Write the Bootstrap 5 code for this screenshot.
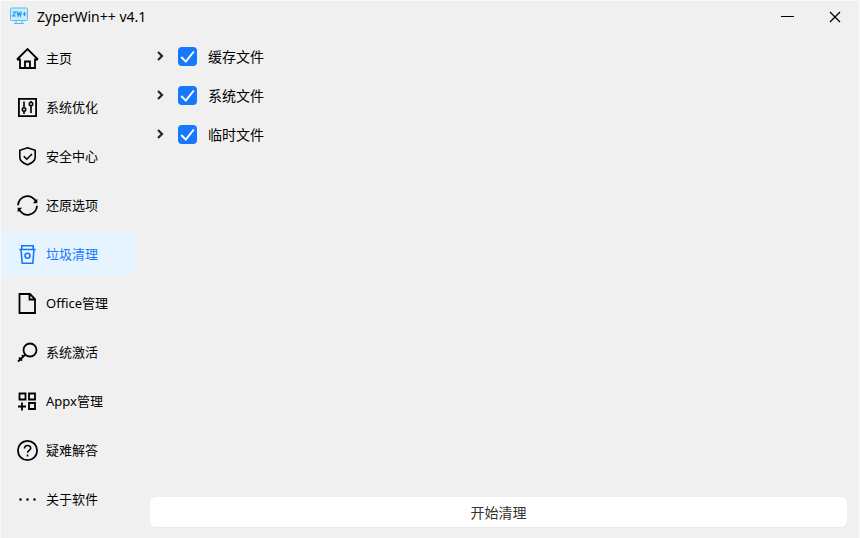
<!DOCTYPE html>
<html lang="zh-CN">
<head>
<meta charset="utf-8">
<meta name="viewport" content="width=device-width, initial-scale=1">
<title>ZyperWin++ v4.1</title>
<link href="https://cdn.jsdelivr.net/npm/bootstrap@5.3.0/dist/css/bootstrap.min.css" rel="stylesheet">
<style>
body { font-family: "Noto Sans", "Noto Sans CJK SC", sans-serif; font-size: 13px; line-height: 20px; color: #000; background: #f0f0f0; }
.app-window { border: 1px solid #fafafa; border-bottom: 0; }
.titlebar { height: 32px; padding-left: 8px; margin-bottom: 2px; }
.app-logo { width: 20px; height: 20px; margin: 0 8px 2px 0; }
.app-title { font-size: 14px; }
.win-btn { width: 48px; height: 32px; color: #000; }
.side { width: 134px; padding: 0 1px; gap: 3px; }
.side .nav-link { height: 46px; padding: 0 0 0 14px; gap: 7px; color: #000; border-radius: 6px; white-space: nowrap; }
.side .nav-link.active { color: #1677ff; background: #e6f4ff; }
.side svg { width: 23px; height: 23px; flex: none; }
.stroke { fill: none; stroke: currentColor; stroke-width: 1.8; }
.stroke-thin { stroke-width: 1.6; }
.content { padding: 2px 12px 11px 15px; }
.tree-row { height: 39px; font-size: 14px; }
.twisty { width: 20px; height: 20px; margin: 0 8px 2px 0; }
.twisty .stroke { stroke-width: 2.2; }
.tree-row .form-check-input { width: 19px; height: 19px; margin: 0 11px 0 0; border: 0; border-radius: 4px; }
.tree-row .form-check-input:checked { background-color: #1677ff; background-image: url("data:image/svg+xml,%3csvg xmlns='http://www.w3.org/2000/svg' viewBox='0 0 19 19'%3e%3cpath d='M3.200 10l4.600 4.600L15.800 4.500' fill='none' stroke='white' stroke-width='2'/%3e%3c/svg%3e"); }
.run-btn, .run-btn:hover { height: 30px; padding: 0; font-size: 14px; color: #333; background: #fff; border: 0; border-radius: 6px; box-shadow: 0 1px 1px #e8e8e8; }
</style>
</head>
<body>
<div class="app-window d-flex flex-column vh-100">
  <header class="titlebar d-flex align-items-center flex-shrink-0">
    <svg class="app-logo" viewBox="0 0 20 20" aria-hidden="true">
      <rect x="1.500" y="2" width="17" height="12.500" rx="1" fill="#c9edff" stroke="#5bbcf5"/>
      <path d="M7 15v2.500M13 15v2.500M5 17.500h10" fill="none" stroke="#5bbcf5"/>
      <path d="M3.500 6h3L3.700 10H7M8 5.500l1 4.500 1.200-3.500 1.200 3.500 1-4.500M13.500 8h4M15.500 6v4" fill="none" stroke="#249bea" stroke-width="1.200"/>
    </svg>
    <span class="app-title me-auto">ZyperWin++ v4.1</span>
    <button type="button" class="win-btn btn p-0 border-0 rounded-0 d-flex align-items-center justify-content-center" aria-label="最小化"><svg width="13" height="14"><path d="M0 6.500h13" stroke="currentColor"/></svg></button>
    <button type="button" class="win-btn btn p-0 border-0 rounded-0 d-flex align-items-center justify-content-center" aria-label="关闭"><svg width="12" height="12"><path d="M1 1l10 10M11 1L1 11" stroke="currentColor" stroke-width="1.300"/></svg></button>
  </header>
  <div class="d-flex flex-grow-1">
    <nav class="side nav flex-column flex-nowrap flex-shrink-0" aria-label="主导航">
      <a class="nav-link d-flex align-items-center" href="#"><svg class="stroke" viewBox="0 0 23 23"><path d="M1 12.500L11.500 2 22 12.500M1 12.500h3v8.500h15v-8.500h3M9 21v-6.500h5V21"/></svg>主页</a>
      <a class="nav-link d-flex align-items-center" href="#"><svg class="stroke" viewBox="0 0 23 23"><path d="M2.900 2.900h17.200v17.200H2.900z"/><path class="stroke-thin" d="M8 5.500v6M8 15.500v2.500M15 5v2M15 10v7"/><circle cx="8" cy="13.500" r="1.700" class="stroke-thin"/><circle cx="15" cy="8" r="1.700" class="stroke-thin"/></svg>系统优化</a>
      <a class="nav-link d-flex align-items-center" href="#"><svg class="stroke stroke-thin" viewBox="0 0 23 23"><path d="M11.500 2.800l7.700 2.500v7c0 3.200-2.700 5.700-7.700 7.500-5-1.800-7.700-4.300-7.700-7.500v-7zM7.800 11.200l3 3 5.200-5.200"/></svg>安全中心</a>
      <a class="nav-link d-flex align-items-center" href="#"><svg class="stroke" viewBox="0 0 23 23"><path d="M2 11.300A9.400 9.400 0 0 1 20 7.800M21 11.700A9.400 9.400 0 0 1 3 15.200"/><path d="M21.300 4.800V9.200h-4.500zM1.700 18.200V13.800h4.500z" fill="currentColor" stroke="none"/></svg>还原选项</a>
      <a class="nav-link active d-flex align-items-center" aria-current="page" href="#"><svg class="stroke stroke-thin" viewBox="0 0 23 23"><path d="M3.300 6.500h16.400M5.800 6V2.800h11.400V6M5 6.500l1.200 13.700h10.600L18 6.500"/><circle cx="11.500" cy="12.800" r="2.500"/></svg>垃圾清理</a>
      <a class="nav-link d-flex align-items-center" href="#"><svg class="stroke" viewBox="0 0 23 23"><path d="M3.500 2h10.500l5 5v14H3.500zM13.500 2v5.500h5.500"/></svg>Office管理</a>
      <a class="nav-link d-flex align-items-center" href="#"><svg class="stroke" viewBox="0 0 23 23"><circle cx="14" cy="9" r="6.500"/><path d="M9.500 13.500L2 20.500M3 16.500l3 3.200M6 14l2 2.200"/></svg>系统激活</a>
      <a class="nav-link d-flex align-items-center" href="#"><svg class="stroke" viewBox="0 0 23 23"><path d="M3.500 3.500h6v6h-6zM13 3.500h6v6h-6zM13 13h6v6h-6zM6 12.500v8M2 16.500h8"/></svg>Appx管理</a>
      <a class="nav-link d-flex align-items-center" href="#"><svg class="stroke" viewBox="0 0 23 23"><circle cx="11.500" cy="11.500" r="9.600"/><path class="stroke-thin" d="M8.500 9.500c0-4 6.200-4 6.200-.3 0 2-3.200 2.300-3.200 4.600M11.500 15.500v1.900"/></svg>疑难解答</a>
      <a class="nav-link d-flex align-items-center" href="#"><svg viewBox="0 0 23 23" fill="currentColor"><circle cx="4.500" cy="11.500" r="1.200"/><circle cx="11.500" cy="11.500" r="1.200"/><circle cx="18.500" cy="11.500" r="1.200"/></svg>关于软件</a>
    </nav>
    <main class="content d-flex flex-column flex-grow-1">
      <div class="tree-row d-flex align-items-center"><button type="button" class="twisty btn p-0 border-0 d-flex align-items-center justify-content-center" aria-label="展开缓存文件"><svg width="8" height="10"><path class="stroke" d="M2 1l4 4-4 4"/></svg></button><input class="form-check-input" type="checkbox" id="cache" checked><label for="cache">缓存文件</label></div>
      <div class="tree-row d-flex align-items-center"><button type="button" class="twisty btn p-0 border-0 d-flex align-items-center justify-content-center" aria-label="展开系统文件"><svg width="8" height="10"><path class="stroke" d="M2 1l4 4-4 4"/></svg></button><input class="form-check-input" type="checkbox" id="sys" checked><label for="sys">系统文件</label></div>
      <div class="tree-row d-flex align-items-center"><button type="button" class="twisty btn p-0 border-0 d-flex align-items-center justify-content-center" aria-label="展开临时文件"><svg width="8" height="10"><path class="stroke" d="M2 1l4 4-4 4"/></svg></button><input class="form-check-input" type="checkbox" id="temp" checked><label for="temp">临时文件</label></div>
      <button type="button" class="run-btn btn w-100 mt-auto">开始清理</button>
    </main>
  </div>
</div>
<script src="https://cdn.jsdelivr.net/npm/bootstrap@5.3.0/dist/js/bootstrap.bundle.min.js"></script>
</body>
</html>
